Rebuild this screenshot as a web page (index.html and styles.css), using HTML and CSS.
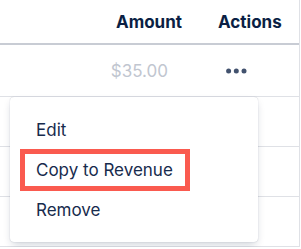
FILE: index.html
```html
<!DOCTYPE html>
<html lang="en">
<head>
    <meta charset="UTF-8">
    <title>Expenses</title>
    <link rel="stylesheet" href="styles.css">
</head>
<body>
    <!-- table -->
    <div class="table">
        <div class="row head">
            <div class="cell fill"></div>
            <div class="cell amount">Amount</div>
            <div class="cell actions">Actions</div>
        </div>
        <div class="row first">
            <div class="cell fill"></div>
            <div class="cell amount value">$35.00</div>
            <div class="cell actions">
                <button class="more" type="button">
                    <svg width="21" height="6" viewBox="0 0 21 6">
                        <circle cx="2.6" cy="3" r="2.5"/>
                        <circle cx="10.3" cy="3" r="2.5"/>
                        <circle cx="18" cy="3" r="2.5"/>
                    </svg>
                </button>
            </div>
        </div>
        <div class="row"></div>
        <div class="row"></div>
        <div class="row"></div>
    </div>

    <!-- row menu -->
    <ul class="menu">
        <li class="menu-item">Edit</li>
        <li class="menu-item"><span class="mark">Copy to Revenue</span></li>
        <li class="menu-item">Remove</li>
    </ul>
</body>
</html>
```

FILE: styles.css
```css
/* base */
* {
    margin: 0;
    padding: 0;
    box-sizing: border-box;
    font-family: Inter, 'Liberation Sans', Arial, sans-serif;
}

body {
    background: #fff;
    position: relative;
    overflow: hidden;
}

/* table */
.table {
    width: 300px;
    border-right: 1px solid #dfe1e6;
}

.row {
    display: flex;
    height: 50px;
    border-bottom: 1px solid #dfe1e6;
}

.row.head {
    height: 45px;
    border-bottom: 2px solid #c8ccd4;
    color: #0b1f44;
    font-weight: 700;
    font-size: 17px;
}

.row.first {
    height: 52px;
}

.cell {
    display: flex;
    align-items: center;
}

.fill {
    flex: 1;
}

.amount {
    width: 103px;
    justify-content: flex-end;
    padding-right: 20px;
}

.amount.value {
    padding-right: 34px;
    color: #c1c6d0;
    font-size: 17px;
}

.actions {
    width: 97px;
    padding-left: 16px;
}

.more {
    background: none;
    border: none;
    padding: 0 8px;
    display: flex;
    align-items: center;
    cursor: pointer;
}

.more svg {
    fill: #42526e;
}

/* dropdown menu */
.menu {
    position: absolute;
    left: 10px;
    top: 97px;
    width: 248px;
    height: 145px;
    list-style: none;
    padding: 13px 0 12px;
    background: #fff;
    border-radius: 4px;
    box-shadow: 0 4px 8px -2px rgba(9, 30, 66, 0.22), 0 0 1px rgba(9, 30, 66, 0.3);
}

.menu-item {
    height: 40px;
    display: flex;
    align-items: center;
    padding-left: 26px;
    color: #172b4d;
    font-size: 17px;
}

.mark {
    display: inline-block;
    margin-left: -16px;
    padding: 6px 12px 6px 11px;
    border: 5px solid #fa5a4f;
}
```
